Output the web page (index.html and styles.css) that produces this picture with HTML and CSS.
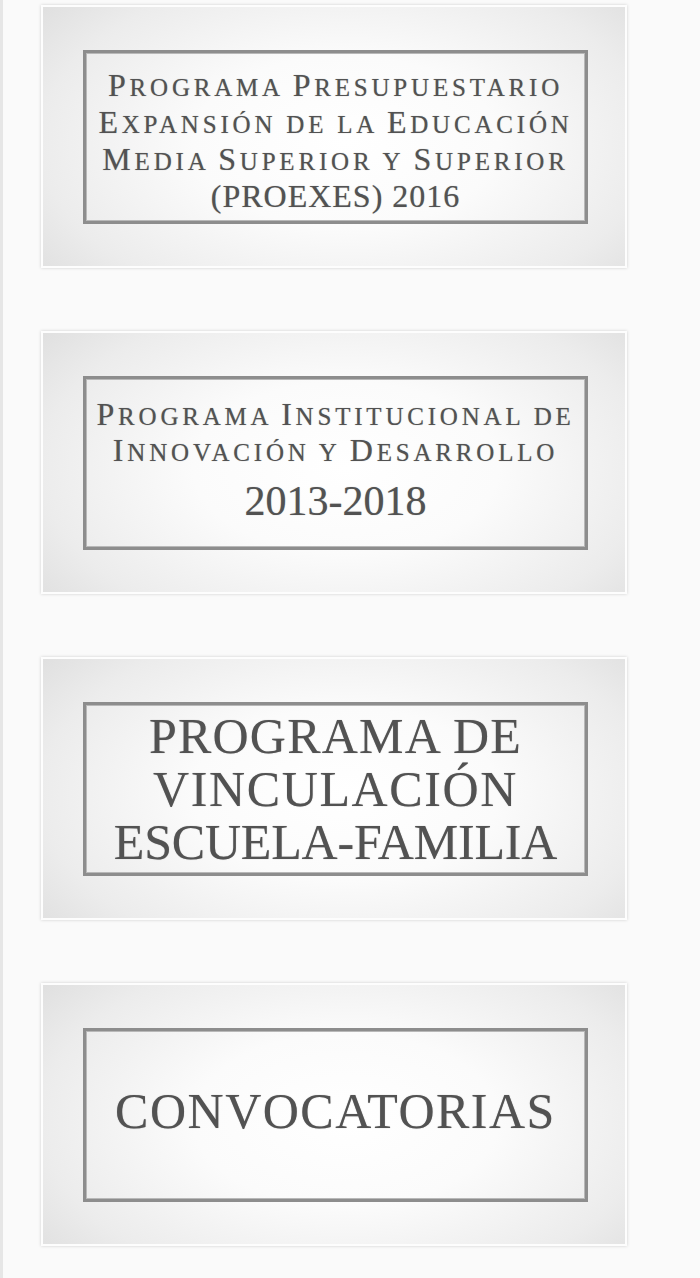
FILE: index.html
```html
<!DOCTYPE html>
<html lang="es">
<head>
<meta charset="utf-8">
<title>Programas</title>
<link rel="stylesheet" href="styles.css">
</head>
<body>
<div class="sidebar">
  <a class="card" href="#">
    <div class="frame">
      <p class="title sc t1"><span class="ini">P</span>rograma <span class="ini">P</span>resupuestario<br><span class="ini">E</span>xpansión de la <span class="ini">E</span>ducación<br><span class="ini">M</span>edia <span class="ini">S</span>uperior y <span class="ini">S</span>uperior<br><span class="full">(PROEXES) 2016</span></p>
    </div>
  </a>
  <a class="card" href="#">
    <div class="frame">
      <p class="title sc t2"><span class="ini">P</span>rograma <span class="ini">I</span>nstitucional de<br><span class="ini">I</span>nnovación y <span class="ini">D</span>esarrollo</p>
      <p class="year">2013-2018</p>
    </div>
  </a>
  <a class="card" href="#">
    <div class="frame">
      <p class="title t3"><span class="wide">PROGRAMA DE</span><br><span class="mid">VINCULACIÓN</span><br><span class="narrow">ESCUELA-FAMILIA</span></p>
    </div>
  </a>
  <a class="card" href="#">
    <div class="frame">
      <p class="title t4">CONVOCATORIAS</p>
    </div>
  </a>
</div>
</body>
</html>
```

FILE: styles.css
```css
html, body {
  margin: 0;
  padding: 0;
}
body {
  background: #fafafa;
  font-family: "Liberation Serif", "Times New Roman", serif;
}
.sidebar {
  border-left: 3px solid #e6e6e6;
  min-height: 1278px;
  box-sizing: border-box;
  padding: 5px 0 0 38px;
  display: flex;
  flex-direction: column;
  gap: 63px;
}
.card {
  display: block;
  box-sizing: border-box;
  width: 586px;
  height: 263px;
  padding: 43px 37px 42px 40px;
  border: 2px solid #fdfdfd;
  background: radial-gradient(ellipse 75% 95% at 52% 52%, #ffffff 0%, #fbfbfb 35%, #ececec 70%, #d8d8d8 100%);
  box-shadow: 0 0 3px rgba(0, 0, 0, 0.18);
  text-decoration: none;
}
.frame {
  box-sizing: border-box;
  height: 100%;
  border: 3px solid #8d8d8d;
  box-shadow: inset 0 0 0 1px #b8b8b8;
  display: flex;
  flex-direction: column;
  align-items: center;
  justify-content: center;
  text-align: center;
}
.title {
  margin: 0;
  color: #525252;
  text-shadow: 0 0 1px rgba(0, 0, 0, 0.35);
  white-space: nowrap;
}
.sc {
  text-transform: uppercase;
  font-size: 25px;
  letter-spacing: 3.8px;
}
.ini {
  font-size: 32px;
  line-height: 0;
}
.full {
  font-size: 32px;
  line-height: 0;
  letter-spacing: 1px;
}
.t1 {
  line-height: 37px;
  margin-top: 12px;
}
.t2 {
  line-height: 36px;
  margin-top: -4px;
}
.year {
  margin: 8px 0 0;
  color: #525252;
  font-size: 42px;
  line-height: 44px;
  text-shadow: 0 0 1px rgba(0, 0, 0, 0.35);
}
.t3 {
  font-size: 50px;
  line-height: 53px;
}
.wide {
  letter-spacing: 1.2px;
}
.mid {
  letter-spacing: 1.6px;
}
.narrow {
  letter-spacing: -0.2px;
}
.t4 {
  font-size: 50px;
  line-height: 56px;
  letter-spacing: 1.5px;
  margin-top: -8px;
}
```
